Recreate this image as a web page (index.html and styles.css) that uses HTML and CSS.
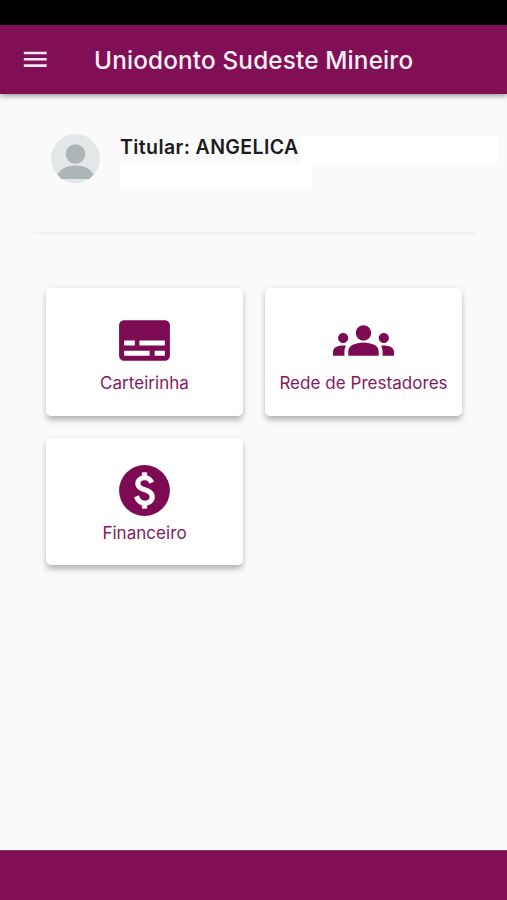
FILE: index.html
```html
<!DOCTYPE html>
<html lang="pt-BR">
<head>
<meta charset="utf-8">
<title>Uniodonto Sudeste Mineiro</title>
<link rel="stylesheet" href="styles.css">
</head>
<body>
<div class="status"></div>
<header class="appbar">
  <svg class="menu" viewBox="0 0 24 24"><path d="M3 18h18v-2H3v2zm0-5h18v-2H3v2zm0-7v2h18V6H3z"/></svg>
  <h1 class="title">Uniodonto Sudeste Mineiro</h1>
</header>
<main class="content">
  <section class="profile">
    <svg class="avatar" viewBox="0 0 50 50"><circle cx="25.500" cy="24.500" r="24.500" fill="#e3e7e8"/><circle cx="25.500" cy="20" r="9.800" fill="#adb5b7"/><path d="M7.500 40.500C10.500 34.500 17.500 31.500 25.500 31.500S40.500 34.500 43.500 40.500Q41.500 43 39.500 45H11.500Q9.500 43 7.500 40.500z" fill="#adb5b7"/></svg>
    <div class="info">
      <div class="line"><span class="name">Titular: ANGELICA</span></div>
      <div class="line-short"></div>
    </div>
  </section>
  <hr class="divider">
  <nav class="grid">
    <a class="card">
      <svg class="icon" viewBox="0 0 24 24"><path d="M20 4H4c-1.100 0-2 .9-2 2v12c0 1.100.9 2 2 2h16c1.100 0 2-.9 2-2V6c0-1.100-.9-2-2-2zM4 12h4.200v2H4v-2zm10 6H4v-2h10v2zm6 0h-4v-2h4v2zm0-4H10v-2h10v2z"/></svg>
      <span class="label">Carteirinha</span>
    </a>
    <a class="card">
      <svg class="icon" viewBox="0 0 24 24"><path d="M12 12.750c1.630 0 3.070.39 4.240.9 1.080.48 1.760 1.560 1.760 2.730V18H6v-1.610c0-1.180.68-2.260 1.760-2.730 1.170-.52 2.610-.91 4.240-.91zM4 13c1.100 0 2-.9 2-2s-.9-2-2-2-2 .9-2 2 .9 2 2 2zm1.130 1.100c-.37-.06-.74-.1-1.130-.1-.99 0-1.930.21-2.780.58C.48 14.900 0 15.620 0 16.430V18h4.500v-1.610c0-.83.23-1.610.63-2.290zM20 13c1.100 0 2-.9 2-2s-.9-2-2-2-2 .9-2 2 .9 2 2 2zm4 3.430c0-.81-.48-1.530-1.220-1.850-.85-.37-1.790-.58-2.780-.58-.39 0-.76.04-1.130.1.4.68.63 1.460.63 2.290V18H24v-1.570zM12 6c1.660 0 3 1.340 3 3s-1.340 3-3 3-3-1.340-3-3 1.340-3 3-3z"/></svg>
      <span class="label">Rede de Prestadores</span>
    </a>
    <a class="card">
      <svg class="icon" viewBox="0 0 24 24"><circle cx="12" cy="12" r="10"/><path class="coin" d="M12.880 17.760V19h-1.750v-1.290c-.74-.18-2.390-.77-3.020-2.960l1.650-.67c.06.22.58 2.090 2.400 2.090.93 0 1.980-.48 1.980-1.610 0-.96-.7-1.460-2.280-2.030-1.100-.39-3.350-1.030-3.350-3.310 0-.1.010-2.400 2.620-2.960V5h1.750v1.240c1.840.32 2.510 1.790 2.660 2.230l-1.580.67c-.11-.35-.59-1.340-1.900-1.340-.7 0-1.810.37-1.810 1.390 0 .95.86 1.310 2.640 1.900 2.400.83 3.010 2.050 3.010 3.450 0 2.630-2.500 3.130-3.020 3.220z"/></svg>
      <span class="label">Financeiro</span>
    </a>
  </nav>
</main>
<footer class="bottom"></footer>
</body>
</html>
```
FILE: styles.css
```css
* { box-sizing: border-box; }
body {
  margin: 0;
  height: 900px;
  display: flex;
  flex-direction: column;
  background: #fafafa;
  font-family: Inter, "Liberation Sans", sans-serif;
  overflow: hidden;
}
.status { height: 25px; background: #000; }
.appbar {
  height: 69px;
  display: flex;
  align-items: center;
  padding-left: 20px;
  background: #800f55;
  box-shadow: 0 2px 5px rgba(0, 0, 0, .38);
}
.menu { width: 30.500px; height: 30.500px; fill: #fbe9f4; }
.title {
  margin: 0 0 0 43.500px;
  font-size: 24.300px;
  font-weight: 500;
  letter-spacing: .16px;
  line-height: 30px;
  color: #fdeff8;
  white-space: nowrap;
}
.content { flex: 1; padding-top: 39px; }
.profile { display: flex; height: 99px; padding-left: 50px; }
.avatar { width: 50px; height: 50px; margin-top: 1px; }
.info { margin: 2px 0 0 20px; }
.line { width: 377px; height: 29px; background: linear-gradient(#fff, #fff) 181px 1px / 196px 28px no-repeat; }
.name {
  display: block;
  font-size: 19.500px;
  font-weight: 600;
  letter-spacing: .4px;
  line-height: 24px;
  color: #1c1c1e;
  white-space: nowrap;
}
.line-short { width: 192px; height: 24px; background: #fff; }
.divider { height: 2px; margin: 0 31px 0 33px; border: 0; background: #f3f3f3; }
.grid {
  display: grid;
  grid-template-columns: 197px 197px;
  grid-auto-rows: 127.500px;
  gap: 22px;
  margin: 54px 0 0 46px;
}
.card {
  display: flex;
  flex-direction: column;
  align-items: center;
  padding-top: 22px;
  border-radius: 5px;
  background: #fff;
  box-shadow: 0 5px 6px -1px rgba(0, 0, 0, .25), 0 1px 6px rgba(0, 0, 0, .09);
}
.icon { width: 61px; height: 61px; fill: #7d0b53; }
.coin { fill: #fff; stroke: #fff; stroke-width: .3; }
.label {
  font-size: 17px;
  letter-spacing: .04px;
  line-height: 24px;
  color: #85195d;
  white-space: nowrap;
}
.bottom { height: 50px; background: #800f55; border-top: 1px solid #8d3b6b; }
```
